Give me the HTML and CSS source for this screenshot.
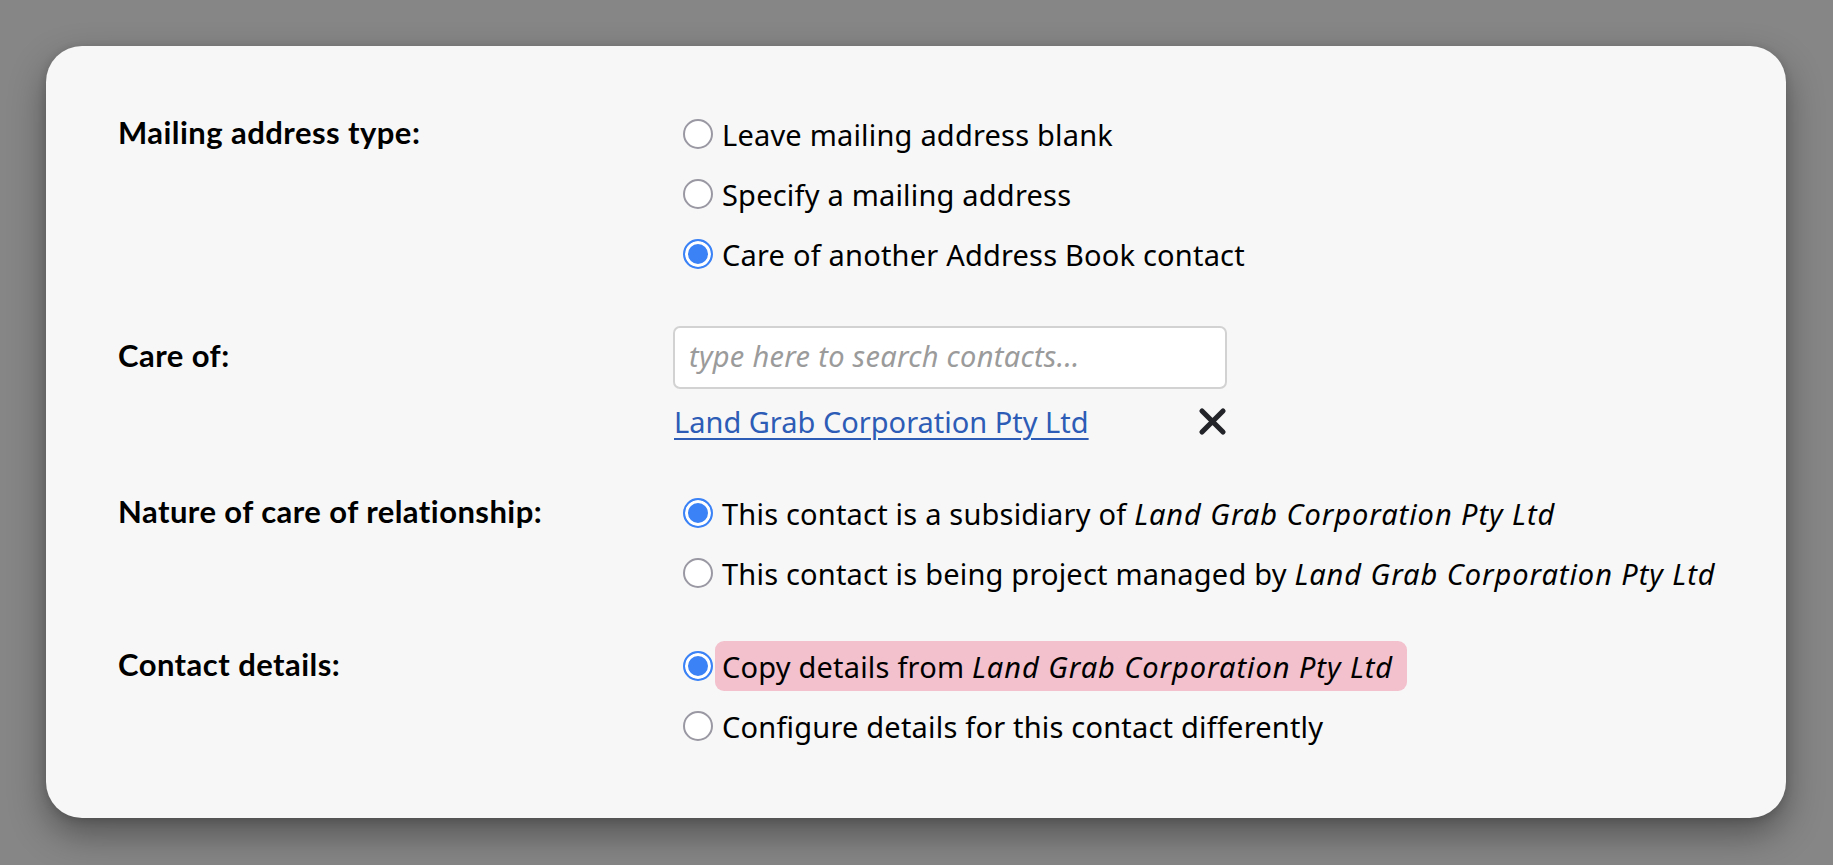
FILE: index.html
```html
<!DOCTYPE html>
<html lang="en">
<head>
<meta charset="utf-8">
<title>Care of contact</title>
<link rel="stylesheet" href="styles.css">
</head>
<body>
<div class="card">
  <form class="form-grid">
    <div class="field-label">Mailing address type:</div>
    <div class="options">
      <label class="option"><input type="radio" name="mail" class="radio"><span class="option-text">Leave mailing address blank</span></label>
      <label class="option"><input type="radio" name="mail" class="radio"><span class="option-text">Specify a mailing address</span></label>
      <label class="option"><input type="radio" name="mail" class="radio" checked><span class="option-text">Care of another Address Book contact</span></label>
    </div>

    <div class="field-label label-input">Care of:</div>
    <div class="careof">
      <input type="text" class="search" placeholder="type here to search contacts...">
      <div class="selected">
        <a href="#" class="contact-link">Land Grab Corporation Pty Ltd</a>
        <svg class="remove" width="31" height="31" viewBox="0 0 31 31" aria-hidden="true">
          <path d="M5 5 L26 26 M26 5 L5 26" stroke="#23242a" stroke-width="5.2" stroke-linecap="round" fill="none"/>
        </svg>
      </div>
    </div>

    <div class="field-label">Nature of care of relationship:</div>
    <div class="options">
      <label class="option"><input type="radio" name="nature" class="radio" checked><span class="option-text">This contact is a subsidiary of <em>Land Grab Corporation Pty Ltd</em></span></label>
      <label class="option"><input type="radio" name="nature" class="radio"><span class="option-text">This contact is being project managed by <em>Land Grab Corporation Pty Ltd</em></span></label>
    </div>

    <div class="field-label tight">Contact details:</div>
    <div class="options tight">
      <label class="option"><input type="radio" name="details" class="radio" checked><span class="option-text highlight">Copy details from <em>Land Grab Corporation Pty Ltd</em></span></label>
      <label class="option"><input type="radio" name="details" class="radio"><span class="option-text">Configure details for this contact differently</span></label>
    </div>
  </form>
</div>
</body>
</html>
```

FILE: styles.css
```css
html, body {
  margin: 0;
  padding: 0;
}

body {
  background: #868686;
  padding: 46px 47px 47px 46px;
  font-family: "Noto Sans", "Open Sans", sans-serif;
  color: #000;
  box-sizing: border-box;
  height: 865px;
  overflow: hidden;
}

.card {
  background: #f7f7f7;
  border-radius: 36px;
  box-shadow: 0 16px 36px rgba(0, 0, 0, 0.38), 0 2px 8px rgba(0, 0, 0, 0.15);
  height: 772px;
  box-sizing: border-box;
  padding: 63px 72px 0 72px;
}

.form-grid {
  display: grid;
  grid-template-columns: 565px 1fr;
  row-gap: 47px;
  align-items: start;
  margin: 0;
}

.field-label {
  font-family: "Lato", "Noto Sans", sans-serif;
  font-weight: 700;
  font-size: 31px;
  letter-spacing: 0.45px;
  line-height: 50px;
  height: 50px;
  margin-top: -2px;
}

.field-label.label-input {
  line-height: 63px;
  height: 63px;
  margin-top: -2px;
}

.tight {
  margin-top: -4px;
}

.field-label.tight {
  margin-top: -6px;
}

.options {
  display: flex;
  flex-direction: column;
  gap: 10px;
}

.option {
  display: flex;
  align-items: center;
  height: 50px;
  font-size: 29px;
  letter-spacing: 0.2px;
}

.radio {
  appearance: none;
  -webkit-appearance: none;
  width: 30px;
  height: 30px;
  margin: 0 2px 0 0;
  border-radius: 50%;
  border: 2px solid #9a99a3;
  background: #fff;
  box-sizing: border-box;
  flex: none;
}

.radio:checked {
  border: 2px solid #3a82f6;
  background: #3a82f6;
  box-shadow: inset 0 0 0 3px #fff;
}

.option-text {
  display: flex;
  align-items: center;
  height: 50px;
  padding: 0 14px 0 7px;
  border-radius: 9px;
  white-space: pre;
}

.option-text em {
  font-style: italic;
  letter-spacing: 0.95px;
}

.highlight {
  background: #f2c1cd;
}

.careof {
  display: flex;
  flex-direction: column;
  width: 554px;
  margin-left: -10px;
}

.search {
  height: 63px;
  box-sizing: border-box;
  border: 2px solid #d2d2d2;
  border-radius: 7px;
  background: #fff;
  padding: 0 14px 5px 14px;
  font-family: "Noto Sans", "Open Sans", sans-serif;
  font-size: 29px;
  letter-spacing: 0.3px;
  outline: none;
}

.search::placeholder {
  color: #9b9b9b;
  font-style: italic;
}

.selected {
  display: flex;
  align-items: center;
  justify-content: space-between;
  height: 40px;
  margin-top: 12px;
}

.contact-link {
  color: #2d5cb6;
  font-size: 29px;
  text-decoration: underline;
  text-decoration-thickness: 2px;
  text-underline-offset: 5px;
  margin-left: 1px;
}

.remove {
  display: block;
  margin-right: -1px;
}
```
